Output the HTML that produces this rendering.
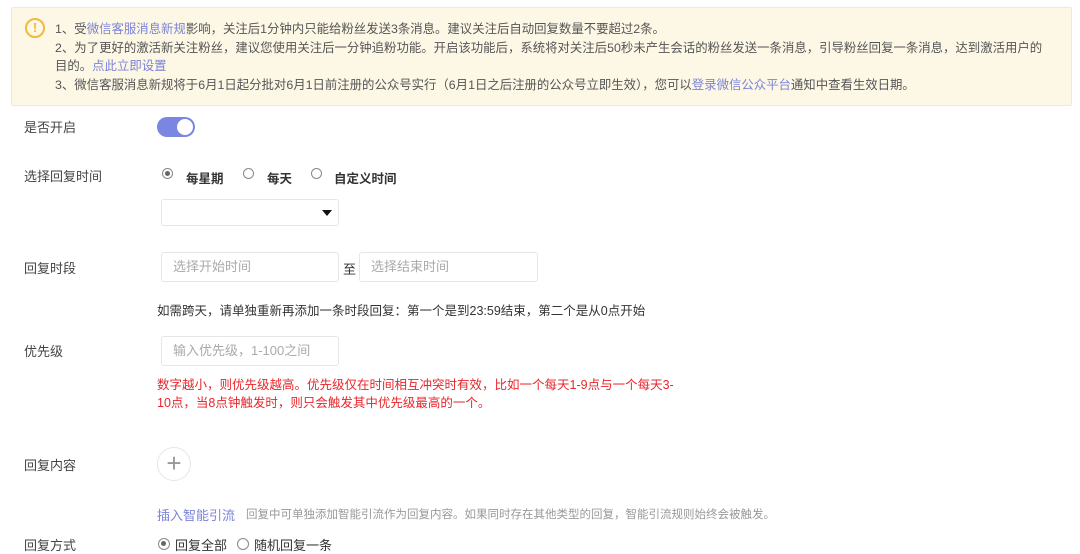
<!DOCTYPE html>
<html><head><meta charset="utf-8"><style>
*{margin:0;padding:0;box-sizing:border-box}
body{width:1080px;height:552px;overflow:hidden;background:#fff;font-family:"Liberation Sans","Noto Sans CJK SC",sans-serif;font-size:12px;color:#333}
.a{position:absolute}
.notice{left:11px;top:7px;width:1061px;height:99px;background:#fdf7e6;border:1px solid #f6e9c3;border-radius:2px}
.notice p{position:absolute;left:43px;line-height:19px;color:#555;font-size:12.4px;white-space:nowrap}
.lk{color:#7b83d9}
.ic{left:25px;top:18px;width:20px;height:20px;border:2px solid #f4b73f;border-radius:50%;color:#f4b73f;font-size:13px;font-weight:bold;text-align:center;line-height:16px}
.lbl{left:24px;font-size:13px;color:#444}
.inp{border:1px solid #e6e6e6;border-radius:3px;height:30px;background:#fff;color:#aaa;font-size:13px;padding-left:11px;line-height:28px}
.rad{width:11px;height:11px;border:1px solid #888;border-radius:50%;background:#fff}
.rad.on::after{content:"";position:absolute;left:2px;top:2px;width:5px;height:5px;border-radius:50%;background:#666}
</style></head><body>
<div class="a notice">
<p style="top:12px">1、受<span class="lk">微信客服消息新规</span>影响，关注后1分钟内只能给粉丝发送3条消息。建议关注后自动回复数量不要超过2条。</p>
<p style="top:31px">2、为了更好的激活新关注粉丝，建议您使用关注后一分钟追粉功能。开启该功能后，系统将对关注后50秒未产生会话的粉丝发送一条消息，引导粉丝回复一条消息，达到激活用户的</p>
<p style="top:49px">目的。<span class="lk">点此立即设置</span></p>
<p style="top:68px">3、微信客服消息新规将于6月1日起分批对6月1日前注册的公众号实行（6月1日之后注册的公众号立即生效），您可以<span class="lk">登录微信公众平台</span>通知中查看生效日期。</p>
</div>
<div class="a ic">!</div>
<div class="a lbl" style="top:117px">是否开启</div>
<div class="a" style="left:157px;top:117px;width:38px;height:20px;border-radius:10px;background:#7b86e3"><div class="a" style="left:20px;top:2px;width:16px;height:16px;border-radius:50%;background:#fff"></div></div>
<div class="a lbl" style="top:166px">选择回复时间</div>
<div class="a rad on" style="left:162px;top:168px"></div>
<div class="a" style="left:186px;top:168px;font-weight:bold;font-size:12.5px">每星期</div>
<div class="a rad" style="left:243px;top:168px"></div>
<div class="a" style="left:267px;top:168px;font-weight:bold;font-size:12.5px">每天</div>
<div class="a rad" style="left:311px;top:168px"></div>
<div class="a" style="left:334px;top:168px;font-weight:bold;font-size:12.5px">自定义时间</div>
<div class="a inp" style="left:161px;top:199px;width:178px;height:27px"></div>
<div class="a" style="left:322px;top:210px;width:0;height:0;border-left:5px solid transparent;border-right:5px solid transparent;border-top:6px solid #111"></div>
<div class="a lbl" style="top:258px">回复时段</div>
<div class="a inp" style="left:161px;top:252px;width:178px">选择开始时间</div>
<div class="a" style="left:343px;top:259px;font-size:13px">至</div>
<div class="a inp" style="left:359px;top:252px;width:179px">选择结束时间</div>
<div class="a" style="left:157px;top:300px;font-size:12.5px">如需跨天，请单独重新再添加一条时段回复：第一个是到23:59结束，第二个是从0点开始</div>
<div class="a lbl" style="top:341px">优先级</div>
<div class="a inp" style="left:161px;top:336px;width:178px">输入优先级，1-100之间</div>
<div class="a" style="left:157px;top:376px;width:520px;color:#e8262b;font-size:12.5px;line-height:18px">数字越小，则优先级越高。优先级仅在时间相互冲突时有效，比如一个每天1-9点与一个每天3-10点，当8点钟触发时，则只会触发其中优先级最高的一个。</div>
<div class="a lbl" style="top:455px">回复内容</div>
<div class="a" style="left:157px;top:447px;width:34px;height:34px;border:1px solid #e6e6e6;border-radius:50%;color:#999;font-size:26px;line-height:30px;text-align:center;font-weight:300">+</div>
<div class="a" style="left:157px;top:505px;color:#7b83d9;font-size:13px">插入智能引流</div>
<div class="a" style="left:246px;top:506px;color:#999;font-size:11.5px">回复中可单独添加智能引流作为回复内容。如果同时存在其他类型的回复，智能引流规则始终会被触发。</div>
<div class="a lbl" style="top:535px">回复方式</div>
<div class="a rad on" style="left:158px;top:538px;width:12px;height:12px"></div>
<div class="a" style="left:175px;top:535px;font-size:13px">回复全部</div>
<div class="a rad" style="left:237px;top:538px;width:12px;height:12px"></div>
<div class="a" style="left:254px;top:535px;font-size:13px">随机回复一条</div>
</body></html>
